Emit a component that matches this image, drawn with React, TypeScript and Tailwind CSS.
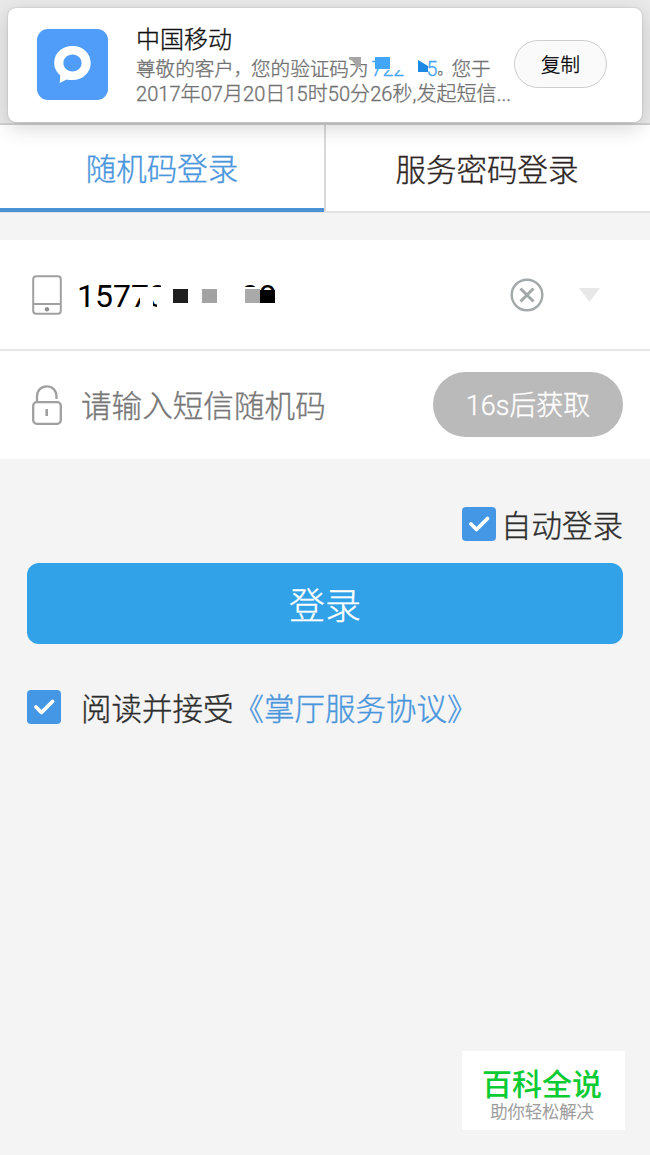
import React from 'react';

const LIGHT = 'font-light [-webkit-text-stroke:0.35px_currentColor]';
const SMS_LINE = `${LIGHT} flex h-[25px] items-center whitespace-nowrap leading-[25px] text-[#727272]`;

const MessageIcon: React.FC = () => (
  <div className="mt-[21px] ml-[29px] h-[71px] w-[71px] shrink-0 rounded-[11px] bg-[#509df9]">
    <svg viewBox="0 0 71 71" className="h-full w-full" fill="#fff">
      <path
        fillRule="evenodd"
        d="M35.500 17c-10.400 0-18.300 7.200-18.300 16.800 0 5.200 2.300 9.500 6 12.500L22.700 54l7-3.600c1.800.4 3.700.6 5.800.6C46 51 53.700 43.600 53.700 34S46 17 35.500 17Zm0 8.500c5.200 0 9.100 3.700 9.100 8.500s-3.900 8.500-9.100 8.500-9.100-3.700-9.100-8.500 3.900-8.500 9.100-8.500Z"
      />
    </svg>
  </div>
);

const PhoneIcon: React.FC = () => (
  <svg width="30" height="40" viewBox="0 0 30 40" fill="none" stroke="#a0a0a0" strokeWidth="2">
    <rect x="1.200" y="1.200" width="27.600" height="37.600" rx="3" />
    <path d="M1 29h28" />
    <circle cx="15" cy="34.300" r="2.200" fill="#8f8f8f" stroke="none" />
  </svg>
);

const LockIcon: React.FC = () => (
  <svg width="30" height="40" viewBox="0 0 30 40" fill="none" stroke="#a0a0a0" strokeWidth="2.300">
    <rect x="1.200" y="17.200" width="27.600" height="21.600" rx="3.500" />
    <path d="M5 17v-5.500C5 5.500 9.200 1.300 14.800 1.300S24.500 5.500 24.500 11.500V14" />
    <path d="M14.700 24v7" strokeWidth="2.600" />
  </svg>
);

const Checkbox: React.FC = () => (
  <svg width="34" height="34" viewBox="0 0 34 34" fill="none" className="shrink-0">
    <rect width="34" height="34" rx="4" fill="#4397e5" />
    <path d="m9 17 5.500 5.500L25.500 11.500" stroke="#fff" strokeWidth="3.800" strokeLinecap="round" strokeLinejoin="round" />
  </svg>
);

const App: React.FC = () => {
  return (
    <div className="flex h-[1155px] w-[650px] flex-col overflow-hidden bg-[#f4f4f4] font-['Roboto','Noto_Sans_CJK_SC',sans-serif]">
      {/* Incoming message */}
      <div className="relative z-10 h-[123px] shrink-0 px-2 pt-2">
        <div className="absolute inset-0 bg-[#e9e9e9]" />
        <div className="relative flex h-[114px] rounded-lg bg-white shadow-[0_6px_20px_rgba(0,0,0,0.16),0_0_2px_rgba(0,0,0,0.22)]">
          <MessageIcon />
          <div className="ml-7 w-[378px] shrink-0 pt-[15px]">
            <div className={`${LIGHT} h-[34px] text-[24px] leading-[34px] text-[#111]`}>中国移动</div>
            <div className={`${SMS_LINE} relative text-[19.600px]`}>
              <span>尊敬的客户</span>
              <span className="text-[17px]">，</span>
              <span>您的验证码为</span>
              <span className="ml-[3px] w-[55px] text-[#42a5f5]">722</span>
              <span className="w-[11px] text-[#42a5f5]">5</span>
              <span className="text-[14px]">。</span>
              <span>您于</span>
              {/* hidden digits */}
              <span className="absolute top-0 left-[246px] h-[13px] w-[30px] bg-white" />
              <span className="absolute top-0 left-[213px] h-[10px] w-[12px] bg-[#a6a6a6] [clip-path:polygon(0_0,100%_0,100%_100%,55%_100%,45%_45%,0_25%)]" />
              <span className="absolute top-0 left-[239px] h-[12px] w-[15px] bg-[#42a5f5]" />
              <span className="absolute top-[3px] left-[282px] h-[12px] w-[10px] bg-[#1e88e5] [clip-path:polygon(0_0,100%_50%,100%_100%,0_100%)]" />
            </div>
            <div className={`${SMS_LINE} text-[20px] tracking-[0.060px]`}>2017年07月20日15时50分26秒,发起短信...</div>
          </div>
          <button className={`${LIGHT} mt-8 flex h-[48px] w-[93px] shrink-0 items-center justify-center rounded-full border border-[#cecece] bg-[#fafafa] pt-[3px] text-[19.500px] text-black`}>
            复制
          </button>
        </div>
      </div>

      {/* Tabs */}
      <div className={`${LIGHT} flex h-[90px] shrink-0 border-t-2 border-b-2 border-t-[#d0d0d0] border-b-[#e3e3e3] bg-white text-[30.500px]`}>
        <div className="-mb-px flex w-[324px] items-center justify-center border-b-4 border-[#4a90d4] pt-[7px] text-[#4a96dc]">
          随机码登录
        </div>
        <div className="flex flex-1 items-center justify-center border-l-2 border-[#d9d9d9] pt-[5px] pr-[2px] text-[#2c2523]">
          服务密码登录
        </div>
      </div>

      {/* Form */}
      <div className="mt-[27px] shrink-0 bg-white">
        <div className="flex h-[111px] items-center border-b-2 border-[#e6e6e6] pr-[50px] pl-8">
          <PhoneIcon />
          <div className="relative ml-[15px] h-10 w-[210px] text-[32px] leading-[42px] text-black">
            15773
            <span className="absolute top-0 left-[164px]">09</span>
            <span className="absolute top-[12px] left-[56px] h-[11px] w-[35px] bg-white" />
            <span className="absolute top-[12px] left-[63px] h-[22px] w-[13px] bg-white" />
            <span className="absolute top-[12px] left-[80px] h-[22px] w-[12px] bg-white" />
            <span className="absolute top-[8px] left-[84px] h-[8px] w-[8px] bg-white" />
            <span className="absolute top-[12px] left-[163px] h-[22px] w-[20px] bg-white" />
            <span className="absolute top-[16px] left-[183px] h-[18px] w-[20px] bg-white" />
            <span className="absolute top-[14px] left-[96px] h-[14px] w-[15px] bg-[#1e1e1e]" />
            <span className="absolute top-[14px] left-[125px] h-[14px] w-[15px] bg-[#a3a3a3]" />
            <span className="absolute top-[14px] left-[168px] h-[14px] w-[15px] bg-[#a9a9a9]" />
            <span className="absolute top-[15px] left-[183px] h-[13px] w-[15px] bg-black" />
          </div>
          <svg className="ml-auto" width="34" height="34" viewBox="0 0 34 34" fill="none" stroke="#a3a8aa">
            <circle cx="17" cy="17" r="15.300" strokeWidth="2.400" />
            <path d="m10.500 10.500 13 13m0-13-13 13" strokeWidth="3" />
          </svg>
          <svg className="ml-[35px]" width="21" height="14" viewBox="0 0 21 14" fill="#e8e8e8">
            <path d="M0 0h21L10.500 14z" />
          </svg>
        </div>
        <div className={`${LIGHT} flex h-[108px] items-center pr-[27px] pl-8`}>
          <LockIcon />
          <span className="ml-[19px] pt-[4px] text-[30.600px] text-[#777]">请输入短信随机码</span>
          <button className="mb-px ml-auto flex h-[65px] w-[190px] items-center justify-center rounded-full bg-[#bababa] pt-[4px] text-[27px] text-white">
            16s后获取
          </button>
        </div>
      </div>

      <div className={`${LIGHT} mt-[48px] flex h-[34px] items-center justify-end pr-[27px] text-[30.500px] text-[#2d2d2d]`}>
        <Checkbox />
        <span className="ml-[5px] pt-[5px]">自动登录</span>
      </div>

      <button className={`${LIGHT} mx-[27px] mt-[22px] h-[81px] shrink-0 rounded-xl bg-[#31a1e8] pt-[6px] text-[36px] text-white`}>
        登录
      </button>

      <div className={`${LIGHT} mt-[46px] flex h-[34px] items-center pl-[27px] text-[30.500px] text-[#2d2d2d]`}>
        <Checkbox />
        <span className="ml-5 pt-[5px]">阅读并接受</span>
        <span className="pt-[5px] text-[#4a96dc]">《掌厅服务协议》</span>
      </div>

      <div className="mt-auto mr-[25px] mb-[25px] flex h-[79px] w-[163px] flex-col items-center self-end bg-white pt-[16px] pr-[3px]">
        <div className="h-[35px] text-[30px] leading-[36px] font-medium text-[#0ccb34]">百科全说</div>
        <div className={`${LIGHT} h-5 text-[17.300px] leading-5 text-[#999]`}>助你轻松解决</div>
      </div>
    </div>
  );
};

export default App;
